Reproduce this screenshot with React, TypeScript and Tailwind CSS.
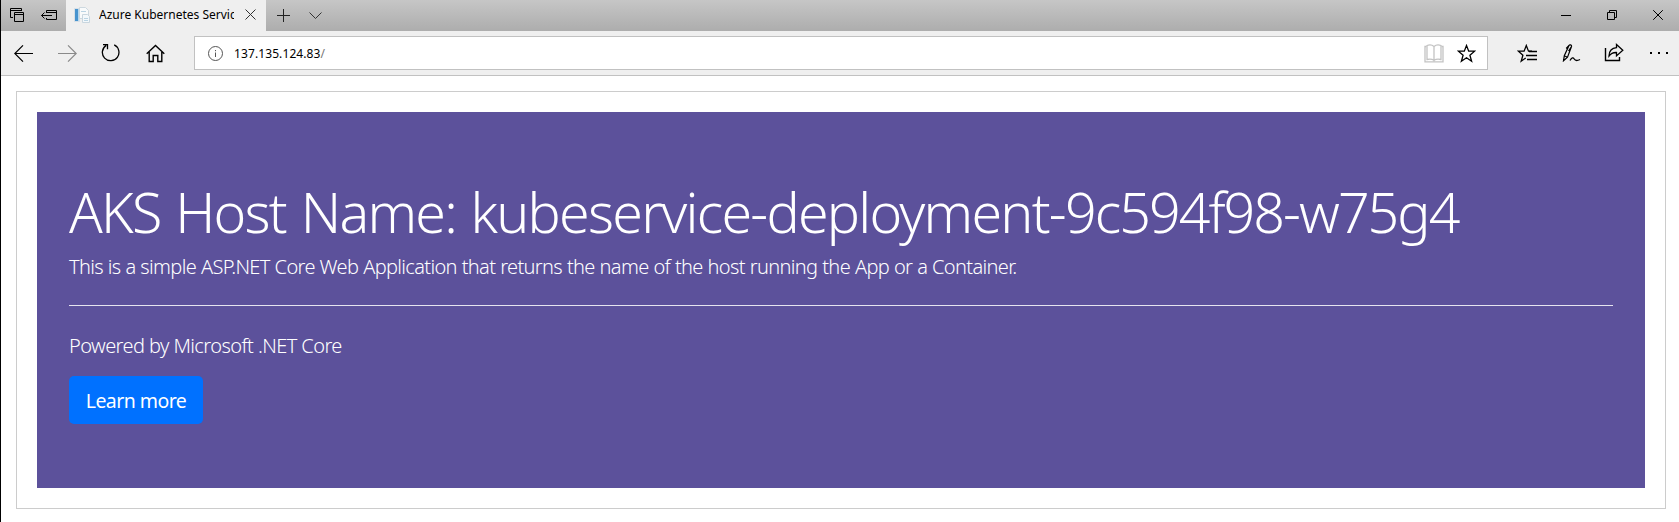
import type { ReactNode } from 'react';

function Icon({ w, h, children, className = '' }: { w: number; h: number; children: ReactNode; className?: string }) {
  return (
    <svg width={w} height={h} viewBox={`0 0 ${w} ${h}`} fill="none" stroke="currentColor" className={`block shrink-0 ${className}`}>
      {children}
    </svg>
  );
}

function TabBar() {
  return (
    <div className="flex h-[31px] bg-linear-to-b from-[#c6c6c6] to-[#adadad] text-black">
      <div className="flex w-[65px] items-start pt-2 pl-[9px]">
        <Icon w={14} h={14}>
          <path d="M3 9.5H.5V.5h11V3M.5 2.5h11M4.5 4.5h9v9h-9zM4.5 6.5h9" />
        </Icon>
        <Icon w={16} h={14} className="ml-[17px]">
          <path d="M5.500 5V2.500h10v9h-10V10M5.500 4.500h10M.5 7.500H11M3.500 4.500l-3 3 3 3" />
        </Icon>
      </div>
      <div className="flex w-[200px] items-start bg-[#efefef] pl-2">
        <Icon w={16} h={16} className="mt-[7px]">
          <path d="M.5 1.500h5v13h-5z" fill="#b5d7ee" stroke="#d6dfe6" />
          <path d="M1 2h3v12H1z" fill="#4793ce" stroke="none" />
          <path d="M5.500.5h6l3 3v8h-9z" fill="#f8fafb" stroke="#cdd8df" />
          <path d="M8.500 7.500h5l2 2v6h-7z" fill="#f3f8fb" stroke="#c9d6df" />
          <path d="M7 4.500h5M10 11.500h4M10 13.500h4" stroke="#b9d3e3" />
        </Icon>
        <div className="ml-[9px] w-[135px] overflow-hidden pt-[5px] text-[12px] leading-5 whitespace-nowrap">Azure Kubernetes Service</div>
        <Icon w={11} h={11} className="mt-[9px] ml-[11px] text-[#333]">
          <path d="M.5.5l10 10M10.500.5l-10 10" />
        </Icon>
      </div>
      <Icon w={13} h={13} className="mt-[9px] ml-[11px] text-[#222]">
        <path d="M6.500 0v13M0 6.500h13" />
      </Icon>
      <Icon w={13} h={7} className="mt-[12px] ml-[19px] text-[#333]">
        <path d="M.5.5l6 6 6-6" />
      </Icon>
      <div className="flex-1" />
      <Icon w={10} h={1} className="mt-[15px]">
        <path d="M0 .5h10" />
      </Icon>
      <Icon w={10} h={10} className="mt-[10px] ml-[36px]">
        <path d="M.5 2.500h7v7h-7zM2.500 2.500v-2h7v7h-2" />
      </Icon>
      <Icon w={10} h={10} className="mt-[10px] mr-[16px] ml-[36px]">
        <path d="M.2.2l9.600 9.600M9.800.2L.2 9.800" />
      </Icon>
    </div>
  );
}

const STAR = 'M9.500 1.500l2.200 5.700h5.900l-4.700 4 1.700 6-5.100-3.500-5.100 3.500 1.700-6-4.700-4h5.900z';

function NavBar() {
  return (
    <div className="flex h-[45px] items-start border-b border-[#c1c1c1] bg-[#efefef] text-black">
      <Icon w={19} h={17} className="mt-[14px] ml-[13px]">
        <path d="M19 8.500H1M9 .4L.8 8.500 9 16.600" strokeWidth="1.200" />
      </Icon>
      <Icon w={19} h={17} className="mt-[14px] ml-[25px] text-[#8a8a8a]">
        <path d="M0 8.500h18M10 .4l8.200 8.100-8.200 8.100" strokeWidth="1.200" />
      </Icon>
      <Icon w={19} h={19} className="mt-[12px] ml-[24px]">
        <path d="M13.200 1.900A8.300 8.300 0 1 1 5.200 2.400M2 1.700h4.500v4.600" strokeWidth="1.300" />
      </Icon>
      <Icon w={19} h={19} className="mt-[13px] ml-[26px]">
        <path d="M.7 9.800l8.800-8.300 8.800 8.300M3.200 8v9.500h4v-6h4.600v6h4V8" strokeWidth="1.400" />
      </Icon>
      <div className="mt-[5px] ml-[29px] flex h-[34px] w-[1294px] items-start border border-[#c1c1c1] bg-white">
        <Icon w={15} h={15} className="mt-[9px] ml-[13px] text-[#555]">
          <circle cx="7.500" cy="7.500" r="7" />
          <path d="M7.500 6.500V11M7.500 4v1.200" />
        </Icon>
        <div className="ml-[11px] pt-[7px] text-[12px] leading-5 tracking-[0.100px] whitespace-nowrap">
          137.135.124.83<span className="text-[#777]">/</span>
        </div>
        <div className="flex-1" />
        <Icon w={20} h={19} className="mt-[7px] text-[#c3c3c3]">
          <path d="M2.500 2.500H1v15.300h18V2.500h-1.500" strokeWidth="1.300" />
          <path d="M10 2.500C8 .7 5 .7 3 1.500v14c2-.5 5-.5 7 .7 2-1.200 5-1.200 7-.7v-14c-2-.8-5-.8-7 1zv15" strokeWidth="1.300" />
        </Icon>
        <Icon w={19} h={19} className="mt-[7px] mr-[11px] ml-[13px]">
          <path d={STAR} strokeWidth="1.300" />
        </Icon>
      </div>
      <Icon w={20} h={19} className="mt-[13px] ml-[29px]">
        <path d="M15 7.200h-3.500L9.300 1.500 7.100 7.200H1.500l4.400 4-1.700 6L8.700 14" strokeWidth="1.300" />
        <path d="M12 7.500h8M9 11.500h11M10 15.500h10" strokeWidth="1.300" />
      </Icon>
      <Icon w={20} h={19} className="mt-[12px] ml-[24px]">
        <path d="M2.500 17.800l.8-5L8 2.500c.6-1.400 2.900-.5 2.500 1L6.500 14.200 2.500 17.800zM3.300 12.800l3.200 1.400M8 2.500L5.200 5.500M10.500 3.500L7.500 8" strokeWidth="1.200" />
        <path d="M9 17.500c1.700-3 3.200-3.300 4.200-1.500 1.200 2.200 3.200 1.800 5.800.5" strokeWidth="1.300" />
      </Icon>
      <Icon w={20} h={19} className="mt-[12px] ml-[23px]">
        <path d="M1.500 5v12.500h14V14" strokeWidth="1.400" />
        <path d="M12.500 1.500l6.300 5.700-6.300 5.700V9.500C9 9.300 7 10.300 5 13c.2-5.500 3-8 7.500-8.300z" strokeWidth="1.300" />
      </Icon>
      <Icon w={18} h={3} className="mt-[21px] ml-[26px]">
        <path d="M0 0h2v2H0zM8 0h2v2H8zM16 0h2v2h-2z" fill="currentColor" stroke="none" />
      </Icon>
    </div>
  );
}

export default function App() {
  return (
    <div className="flex h-[522px] w-full flex-col overflow-hidden border-l border-black bg-white font-['Noto_Sans','Open_Sans',sans-serif]">
      <TabBar />
      <NavBar />
      <main className="mt-[15px] mr-[13px] ml-[15px] h-[418px] border border-[#ccc] p-5">
        <section className="flex h-[376px] flex-col items-start bg-[#5c519b] px-8 pt-16 font-light text-white">
          <h1 className="mt-[2px] h-[67px] text-[55.500px] leading-[67px] tracking-[-1.750px] whitespace-nowrap [word-spacing:2px]">
            AKS Host Name: kubeservice-deployment-<span className="tracking-[-1.950px]">9c594f98-w75g4</span>
          </h1>
          <p className="mt-[7px] text-[20px] leading-[30px] tracking-[-0.650px] whitespace-nowrap [word-spacing:0.300px]">
            This is a simple ASP.NET Core Web Application that returns the name of the host running the App or a Container.
          </p>
          <hr className="mt-[23px] w-full border-0 border-t border-[#e6e4ef]" />
          <p className="mt-[25px] text-[20px] leading-[30px] tracking-[-0.580px] whitespace-nowrap">Powered by Microsoft .NET Core</p>
          <a href="#" className="mt-[15px] flex h-12 w-[134px] items-center justify-center rounded-[5px] bg-[#0071ff] pt-[2px] text-[19.500px] font-normal tracking-[-0.550px] whitespace-nowrap">
            Learn more
          </a>
        </section>
      </main>
    </div>
  );
}
